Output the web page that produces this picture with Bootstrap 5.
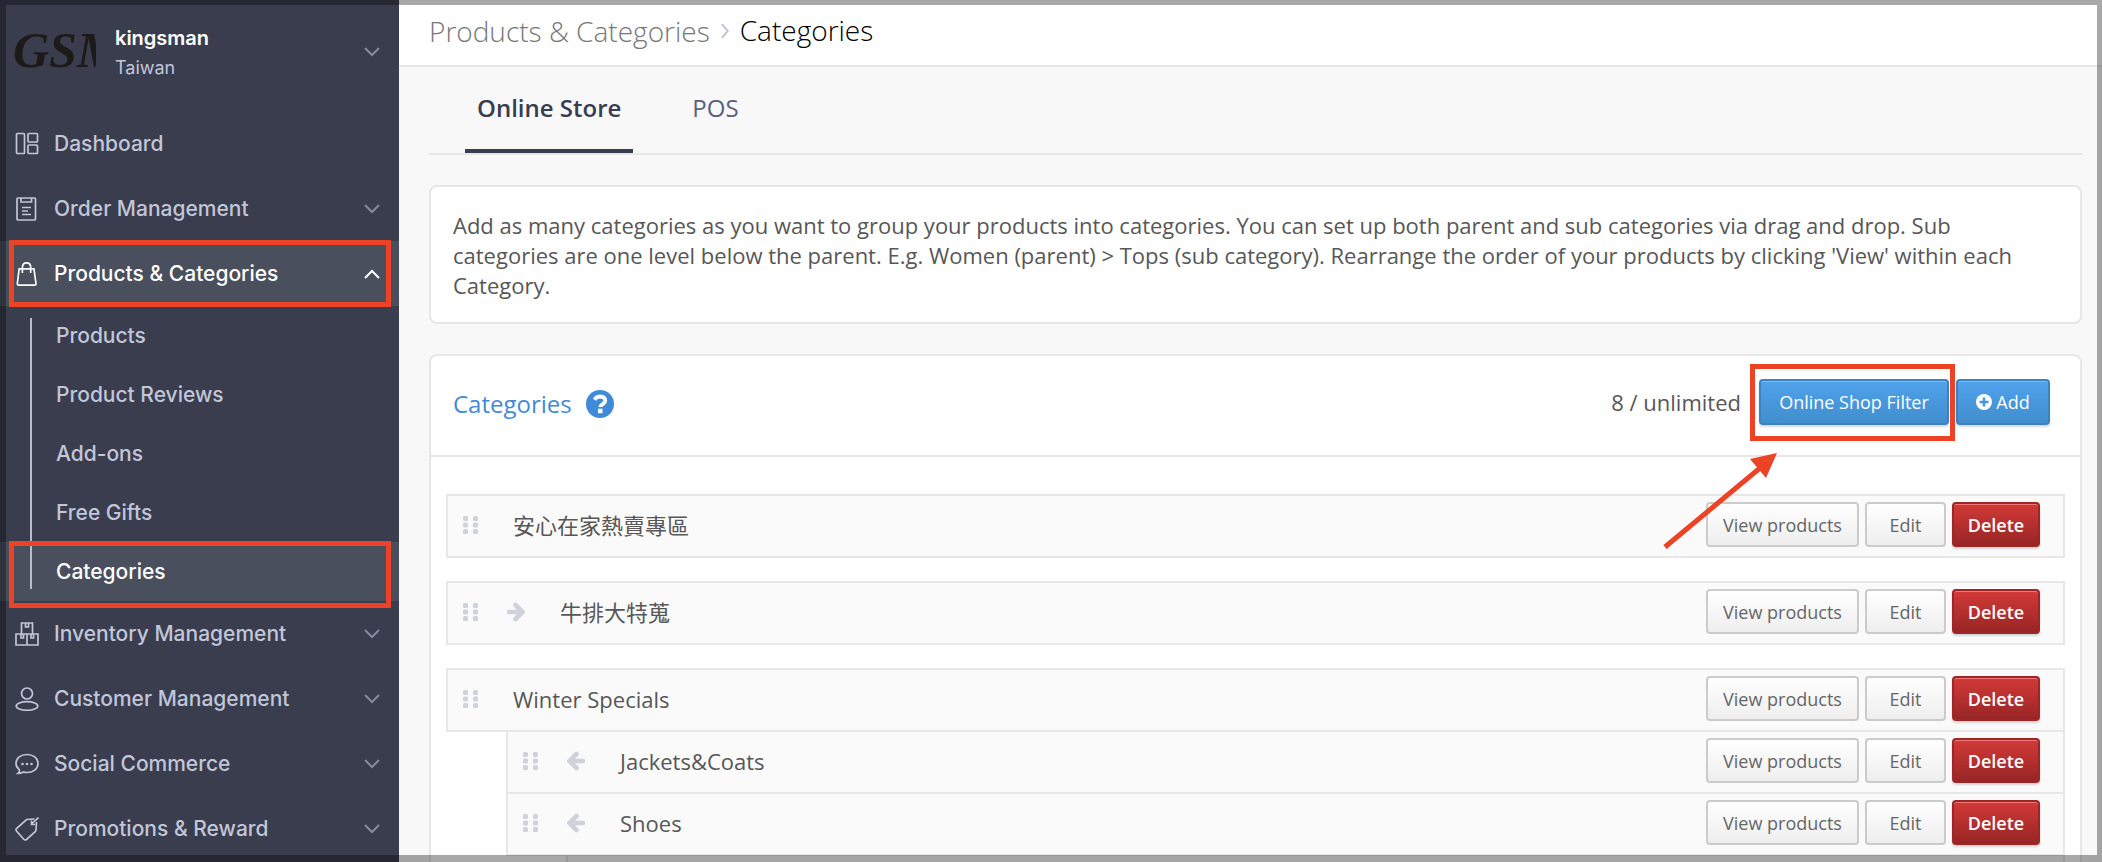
<!DOCTYPE html>
<html lang="en">
<head>
<meta charset="utf-8">
<meta name="viewport" content="width=device-width, initial-scale=1">
<title>Products &amp; Categories - Categories</title>
<link href="https://cdn.jsdelivr.net/npm/bootstrap@5.3.0/dist/css/bootstrap.min.css" rel="stylesheet">
<style>
:root { --line: #e7e7e7; --side: #393d4e; --side-on: #4a4f5d; --side-text: #c1c6d8; --accent: #ec4226; --ink: #575757; }
body { font-family: "Open Sans", "Noto Sans CJK TC", sans-serif; font-size: 22px; line-height: 30px; color: var(--ink); background: #f8f8f8; }
a { color: inherit; text-decoration: none; }
.viewport-frame { position: fixed; inset: 0; border: solid rgba(0,0,0,.34); border-width: 5px 5px 7px 6px; pointer-events: none; z-index: 10; }

/* sidebar */
.sidebar { width: 399px; background: var(--side); color: var(--side-text); font-family: Inter, sans-serif; font-size: 21px; font-weight: 500; }
.shop-head { height: 111px; padding: 23px 19px 0 12px; gap: 19px; }
.shop-logo { width: 84px; height: 54px; padding-left: 1px; color: #1d1a1a; font: italic bold 50px/54px "Liberation Serif", serif; }
.shop-name { color: #fff; font-size: 20px; font-weight: 600; line-height: 30px; }
.shop-place { font-size: 18px; font-weight: 400; line-height: 30px; }
.side-link { height: 65px; padding: 0 19px 0 15px; gap: 15px; position: relative; }
.side-link .glyph { width: 24px; height: 24px; }
.side-link.open, .sub-link.current { background: var(--side-on); color: #fff; }
.chev { width: 16px; height: 10px; color: #858ba0; }
.open .chev { color: #fff; }
.submenu { position: relative; }
.submenu::before { content: ""; position: absolute; left: 30px; top: 12px; bottom: 12px; width: 2px; background: #b9bdcb; z-index: 1; }
.sub-link { height: 59px; padding-left: 56px; position: relative; }
.callout { position: absolute; border: 5px solid var(--accent); z-index: 2; pointer-events: none; }
.callout-nav { left: 9px; right: 8px; top: -1px; height: 67px; }
.callout-btn { inset: -15px -6px -16px -9px; }
.arrow-mark { position: absolute; right: 301px; top: 95px; width: 116px; height: 100px; z-index: 3; pointer-events: none; }

/* page head and tabs */
.page-head { height: 67px; padding: 0 0 3px 30px; border-bottom: 2px solid var(--line); font-size: 28px; font-weight: 300; gap: 10px; }
.page-head a { color: #777; }
.page-head h1 { font-size: 28px; font-weight: 300; color: #000; }
.page-body { padding: 0 20px 0 30px; }
.tabs { height: 88px; padding-left: 36px; gap: 47px; border-bottom: 2px solid var(--line); }
.tab-link { padding: 26px 12px 0; font-size: 24px; color: #59607f; border-bottom: 4px solid transparent; }
.tab-link.active { font-weight: 600; color: #383d4f; border-color: #383d4f; }

/* panels */
.panel { background: #fff; border: 2px solid var(--line); border-radius: 8px; margin-top: 30px; }
.panel-note { padding: 23px 22px 22px; }
.panel-head { padding: 23px 30px 30px 22px; border-bottom: 2px solid var(--line); position: relative; }
.panel-title { padding-top: 3px; font-size: 24px; font-weight: 400; line-height: 30px; color: #3f8bd9; }
.help-mark { margin: 3px 0 0 14px; }
.quota { margin-right: 18px; }
.filter-slot { margin-right: 7px; }
.panel-list { padding: 37px 15px; }
.btn-ui { --bs-btn-font-size: 18px; --bs-btn-line-height: 24px; --bs-btn-border-width: 2px; --bs-btn-border-radius: 4px; --bs-btn-padding-x: 0; --bs-btn-padding-y: 0; height: 45px; }
.btn-plain { color: #666; border-color: #cbcbcb; background: linear-gradient(#fff, #eee); }
.btn-del { color: #fff; font-weight: 600; border-color: #9e2626; background: linear-gradient(#d23a38, #982525); box-shadow: inset 0 1px 0 #e77, 0 2px 2px rgba(0,0,0,.15); }
.btn-act { color: #fff; height: 46px; font-weight: 500; border-color: #3b83c0; background: linear-gradient(#50a2ec, #418ecd); box-shadow: inset 0 1px 0 #82bdf2, 0 2px 2px rgba(0,0,0,.15); }
.w-view { width: 153px; } .w-edit { width: 81px; } .w-del { width: 88px; } .w-filter { width: 190px; } .w-add { width: 94px; }

.cat-row { background: #fafafa; border: 2px solid var(--line); padding: 6px 23px 9px 15px; margin-bottom: 23px; }
.cat-row.has-kids { margin-bottom: 0; }
.kids { margin-left: 60px; }
.kids .cat-row { margin: -2px 0 0; }
.cat-name { padding-left: 35px; }
.grip { width: 15px; height: 18px; color: #cfd2db; }
.shift { width: 18px; height: 20px; margin-left: 29px; color: #cfd2db; }
.row-tools { gap: 6px; }
</style>
</head>
<body>
<svg class="d-none" aria-hidden="true">
  <symbol id="chev" viewBox="0 0 16 10"><path d="M1 1l7 7 7-7" fill="none" stroke="currentColor" stroke-width="2"/></symbol>
  <symbol id="chev-up" viewBox="0 0 16 10"><path d="M1 9l7-7 7 7" fill="none" stroke="currentColor" stroke-width="2"/></symbol>
  <symbol id="grip" viewBox="0 0 15 18"><g fill="currentColor"><rect width="5" height="5" rx="1.5"/><rect x="10" width="5" height="5" rx="1.5"/><rect y="6.5" width="5" height="5" rx="1.5"/><rect x="10" y="6.5" width="5" height="5" rx="1.5"/><rect y="13" width="5" height="5" rx="1.5"/><rect x="10" y="13" width="5" height="5" rx="1.5"/></g></symbol>
  <symbol id="to-right" viewBox="0 0 18 20"><path d="M2 10h13M8.500 3L15.500 10l-7 7" fill="none" stroke="currentColor" stroke-width="4.600" stroke-linecap="round"/></symbol>
  <symbol id="to-left" viewBox="0 0 18 20"><path d="M16 10H3M9.500 3L2.500 10l7 7" fill="none" stroke="currentColor" stroke-width="4.600" stroke-linecap="round"/></symbol>
</svg>
<div class="viewport-frame"></div>
<div class="d-flex vh-100 overflow-hidden">
  <nav class="sidebar flex-shrink-0" aria-label="Main">
    <div class="shop-head d-flex">
      <div class="shop-logo overflow-hidden flex-shrink-0">GSM</div>
      <div class="flex-grow-1">
        <div class="shop-name">kingsman</div>
        <div class="shop-place">Taiwan</div>
      </div>
      <svg class="chev mt-4"><use href="#chev"/></svg>
    </div>
    <a href="#" class="side-link d-flex align-items-center">
      <svg class="glyph" viewBox="0 0 24 24" fill="none" stroke="currentColor" stroke-width="1.7"><rect x="1.500" y="1.500" width="8" height="20" rx="1"/><rect x="13" y="1.500" width="9.500" height="8.500" rx="1"/><rect x="13" y="13" width="9.500" height="8.500" rx="1"/></svg>
      <span class="flex-grow-1">Dashboard</span></a>
    <a href="#" class="side-link d-flex align-items-center">
      <svg class="glyph" viewBox="0 0 24 24" fill="none" stroke="currentColor" stroke-width="1.7"><rect x="2" y="1" width="18.500" height="22" rx="1"/><path d="M6 1v4h10.500V1M7 10.500h9M7 14h6M7 17.500h9"/></svg>
      <span class="flex-grow-1">Order Management</span><svg class="chev"><use href="#chev"/></svg></a>
    <a href="#" class="side-link open d-flex align-items-center">
      <svg class="glyph" viewBox="0 0 22 26" fill="none" stroke="currentColor" stroke-width="1.800"><path d="M2.500 7.500h16l2.300 16q0 1.500-1.500 1.500H2q-1.500 0-1.500-1.500zM6 12V6q0-5 4.500-5t4.500 5v6"/></svg>
      <span class="flex-grow-1">Products &amp; Categories</span><svg class="chev"><use href="#chev-up"/></svg>
      <span class="callout callout-nav"></span></a>
    <div class="submenu">
      <a href="#" class="sub-link d-flex align-items-center">Products</a>
      <a href="#" class="sub-link d-flex align-items-center">Product Reviews</a>
      <a href="#" class="sub-link d-flex align-items-center">Add-ons</a>
      <a href="#" class="sub-link d-flex align-items-center">Free Gifts</a>
      <a href="#" class="sub-link current d-flex align-items-center">Categories<span class="callout callout-nav"></span></a>
    </div>
    <a href="#" class="side-link d-flex align-items-center">
      <svg class="glyph" viewBox="0 0 24 24" fill="none" stroke="currentColor" stroke-width="1.700"><path d="M1 12h22v11H1zM12 12v11M6.500 12V1h11v11M10.500 1v4h3V1M6 12v4h2.500V12M16 12v4h2.500V12"/></svg>
      <span class="flex-grow-1">Inventory Management</span><svg class="chev"><use href="#chev"/></svg></a>
    <a href="#" class="side-link d-flex align-items-center">
      <svg class="glyph" viewBox="0 0 24 24" fill="none" stroke="currentColor" stroke-width="1.700"><circle cx="12" cy="6.500" r="5.500"/><ellipse cx="12" cy="19" rx="10.800" ry="4.300"/></svg>
      <span class="flex-grow-1">Customer Management</span><svg class="chev"><use href="#chev"/></svg></a>
    <a href="#" class="side-link d-flex align-items-center">
      <svg class="glyph" viewBox="0 0 24 24" fill="none" stroke="currentColor" stroke-width="1.700"><path d="M3 21.500q2-1.500 1.300-3.800Q1 15 1 11.500C1 6 6 2.500 12 2.500s11 3.500 11 9-5 9-11 9q-2 0-3.500-.500-2.500 1.500-5.500 1.500z"/><g fill="currentColor" stroke="none"><circle cx="7.500" cy="12" r="1.300"/><circle cx="12" cy="12" r="1.300"/><circle cx="16.500" cy="12" r="1.300"/></g></svg>
      <span class="flex-grow-1">Social Commerce</span><svg class="chev"><use href="#chev"/></svg></a>
    <a href="#" class="side-link d-flex align-items-center">
      <svg class="glyph" viewBox="0 0 24 24" fill="none" stroke="currentColor" stroke-width="1.700"><path d="M19.500 2L11.500 2.500 1.500 11.500Q.500 12.500 1.500 14l7 8q1.500 1.500 3 .500l8.500-7.500q1-1 1-2.500L21.500 5M23.500.500L16.500 7M16.500 3.500v4h3.500"/></svg>
      <span class="flex-grow-1">Promotions &amp; Reward</span><svg class="chev"><use href="#chev"/></svg></a>
  </nav>

  <main class="flex-grow-1">
    <header class="page-head bg-white d-flex align-items-center">
      <a href="#">Products &amp; Categories</a>
      <svg width="10" height="18" viewBox="0 0 11 18"><path d="M2 1.500L8.500 9 2 16.500" fill="none" stroke="#bcc1d2" stroke-width="2"/></svg>
      <h1 class="m-0">Categories</h1>
    </header>
    <div class="page-body">
      <div class="tabs d-flex">
        <a href="#" class="tab-link active">Online Store</a>
        <a href="#" class="tab-link">POS</a>
      </div>
      <section class="panel panel-note">
        <p class="m-0">Add as many categories as you want to group your products into categories. You can set up both parent and sub categories via drag and drop. Sub categories are one level below the parent. E.g. Women (parent) &gt; Tops (sub category). Rearrange the order of your products by clicking 'View' within each Category.</p>
      </section>
      <section class="panel">
        <div class="panel-head d-flex align-items-center">
          <h2 class="panel-title m-0">Categories</h2>
          <svg class="help-mark" width="28" height="28" viewBox="0 0 28 28" role="img" aria-label="Help"><circle cx="14" cy="14" r="14" fill="#3f8bd9"/><path d="M8.500 9.700Q10.500 6.500 14.200 6.500q5 .200 5 4.100 0 2-2.400 3.500-2.300 1.300-2.300 3" fill="none" stroke="#fff" stroke-width="3.800"/><rect x="12" y="18.700" width="4.500" height="4.500" fill="#fff"/></svg>
          <span class="quota ms-auto">8 / unlimited</span>
          <div class="filter-slot position-relative">
            <button type="button" class="btn btn-ui btn-act w-filter">Online Shop Filter</button>
            <span class="callout callout-btn"></span>
          </div>
          <button type="button" class="btn btn-ui btn-act w-add d-flex align-items-center justify-content-center gap-1"><svg width="16" height="16" viewBox="0 0 16 16"><circle cx="8" cy="8" r="8" fill="#fff"/><path d="M8 3.500v9M3.500 8h9" stroke="#4898dd" stroke-width="2.600"/></svg>Add</button>
          <svg class="arrow-mark" viewBox="0 0 116 100" aria-hidden="true"><path d="M2 96L97 17" stroke="#ec4226" stroke-width="5"/><path d="M114 2L87 8l16 19z" fill="#ec4226"/></svg>
        </div>
        <div class="panel-list">
          <div class="cat-row d-flex align-items-center">
            <svg class="grip"><use href="#grip"/></svg><span class="cat-name flex-grow-1">安心在家熱賣專區</span>
            <div class="row-tools d-flex"><button type="button" class="btn btn-ui btn-plain w-view">View products</button><button type="button" class="btn btn-ui btn-plain w-edit">Edit</button><button type="button" class="btn btn-ui btn-del w-del">Delete</button></div>
          </div>
          <div class="cat-row d-flex align-items-center">
            <svg class="grip"><use href="#grip"/></svg><svg class="shift"><use href="#to-right"/></svg><span class="cat-name flex-grow-1">牛排大特蒐</span>
            <div class="row-tools d-flex"><button type="button" class="btn btn-ui btn-plain w-view">View products</button><button type="button" class="btn btn-ui btn-plain w-edit">Edit</button><button type="button" class="btn btn-ui btn-del w-del">Delete</button></div>
          </div>
          <div class="cat-row has-kids d-flex align-items-center">
            <svg class="grip"><use href="#grip"/></svg><span class="cat-name flex-grow-1">Winter Specials</span>
            <div class="row-tools d-flex"><button type="button" class="btn btn-ui btn-plain w-view">View products</button><button type="button" class="btn btn-ui btn-plain w-edit">Edit</button><button type="button" class="btn btn-ui btn-del w-del">Delete</button></div>
          </div>
          <div class="kids">
            <div class="cat-row d-flex align-items-center">
              <svg class="grip"><use href="#grip"/></svg><svg class="shift"><use href="#to-left"/></svg><span class="cat-name flex-grow-1">Jackets&amp;Coats</span>
              <div class="row-tools d-flex"><button type="button" class="btn btn-ui btn-plain w-view">View products</button><button type="button" class="btn btn-ui btn-plain w-edit">Edit</button><button type="button" class="btn btn-ui btn-del w-del">Delete</button></div>
            </div>
            <div class="cat-row d-flex align-items-center">
              <svg class="grip"><use href="#grip"/></svg><svg class="shift"><use href="#to-left"/></svg><span class="cat-name flex-grow-1">Shoes</span>
              <div class="row-tools d-flex"><button type="button" class="btn btn-ui btn-plain w-view">View products</button><button type="button" class="btn btn-ui btn-plain w-edit">Edit</button><button type="button" class="btn btn-ui btn-del w-del">Delete</button></div>
            </div>
            <div class="kids"><div class="cat-row pb-4"></div></div>
          </div>
        </div>
      </section>
    </div>
  </main>
</div>
<script src="https://cdn.jsdelivr.net/npm/bootstrap@5.3.0/dist/js/bootstrap.bundle.min.js"></script>
</body>
</html>
